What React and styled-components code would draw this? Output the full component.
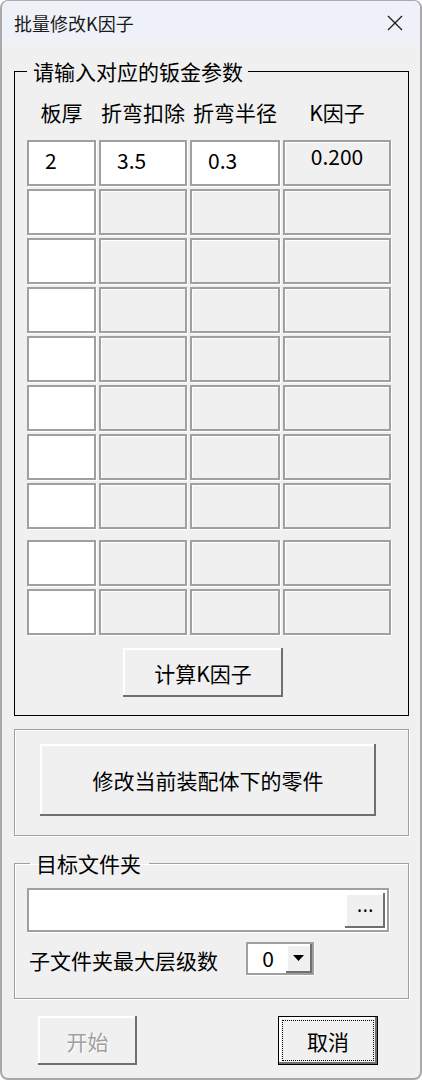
import React from 'react'
import styled, {createGlobalStyle, css} from 'styled-components'

const GlobalStyle = createGlobalStyle`
  html, body {
    margin: 0;
    padding: 0;
    background: #fff;
  }
  body {
    font-family: "Noto Sans CJK SC", "Noto Sans", sans-serif;
    color: #000;
  }
  * {
    box-sizing: border-box;
  }
`

const raised = css`
  background: #f0f0f0;
  border: none;
  box-shadow: inset -2px -2px 0 #707070, inset 2px 2px 0 #fff;
`

const sunken = css`
  border: 2px solid #a0a0a0;
  box-shadow: 1px 1px 0 #fff;
`

const etched = css`
  border: 1px solid #a0a0a0;
  box-shadow: 1px 1px 0 #fff, inset 1px 1px 0 #fff;
`

const Window = styled.div`
  width: 422px;
  height: 1080px;
  display: flex;
  flex-direction: column;
  background: #f0f0f0;
  border: 2px solid #a9a9a9;
  border-top-width: 1px;
  border-radius: 8px;
  overflow: hidden;
`

const TitleBar = styled.div`
  height: 43px;
  flex-shrink: 0;
  display: flex;
  align-items: center;
  justify-content: space-between;
  padding: 0 17px 0 12px;
  background: #eef2f8;
`

const Title = styled.div`
  font-size: 18px;
  line-height: 20px;
  color: #1b1b1b;
`

const Body = styled.div`
  display: flex;
  flex-direction: column;
  padding: 0 11px 0 12px;
`

const Group = styled.fieldset`
  margin: ${p => p.$mt}px 0 0;
  min-width: 0;
  padding: 0 12px ${p => p.$pb}px 12px;
  ${p => (p.$etched ? etched : css`border: 1px solid #000;`)}
`

const Legend = styled.legend`
  margin-left: ${p => p.$ml}px;
  padding: 0 ${p => p.$pr}px 0 6px;
  font-size: 21px;
  line-height: 22px;
`

const Columns = styled.div`
  display: grid;
  grid-template-columns: 69px 88px 90px 108px;
  column-gap: 3px;
  row-gap: 3px;
  margin-top: ${p => p.$mt}px;
`

const HeadLabel = styled.div`
  font-size: 21px;
  line-height: 22px;
  text-align: center;
  white-space: nowrap;
`

const Cell = styled.div`
  height: 46px;
  font-size: 21px;
  line-height: 22px;
  ${sunken}
  background: ${p => (p.$white ? '#fff' : '#f0f0f0')};
  ${p => !p.$white && css`box-shadow: 1px 1px 0 #fff, inset 1px 1px 0 #fff;`}
  ${p =>
    p.$result
      ? css`
          padding-top: 3px;
          text-align: center;
        `
      : css`
          padding: 7px 0 0 16px;
        `}
`

const Button = styled.button`
  ${raised}
  width: ${p => p.$w}px;
  height: ${p => p.$h}px;
  margin: ${p => p.$m || 0};
  padding: 0;
  font-family: inherit;
  font-size: 21px;
  line-height: 22px;
  color: ${p => (p.disabled ? '#a0a0a0' : '#000')};
  ${p => p.disabled && css`text-shadow: 1px 1px 0 #fff;`}
  ${p =>
    p.$default &&
    css`
      border: 1px solid #000;
      padding: 3px;
      display: flex;
    `}
`

const FocusRing = styled.span`
  flex: 1;
  display: flex;
  align-items: center;
  justify-content: center;
  border: 1px dotted #000;
`

const Panel = styled.div`
  ${etched}
  margin-top: 13px;
  padding: 14px 0 19px 25px;
`

const PathField = styled.div`
  ${sunken}
  margin-top: 14px;
  width: 362px;
  height: 44px;
  background: #fff;
  display: flex;
  align-items: center;
  justify-content: flex-end;
  padding-right: 2px;
`

const BrowseButton = styled.button`
  ${raised}
  width: 40px;
  height: 35px;
  padding: 0 0 10px 1px;
  font-family: "Noto Sans", sans-serif;
  font-size: 19px;
  line-height: 16px;
  letter-spacing: 0.5px;
  color: #000;
`

const LevelRow = styled.div`
  margin-top: 10px;
  display: flex;
  align-items: center;
  gap: 28px;
  padding-left: 2px;
`

const Label = styled.span`
  font-size: 21px;
  line-height: 22px;
  padding-top: 3px;
`

const Select = styled.div`
  ${sunken}
  width: 68px;
  height: 33px;
  background: #fff;
  display: flex;
`

const SelectValue = styled.span`
  flex: 1;
  text-align: center;
  font-size: 21px;
  line-height: 29px;
  padding-left: 2px;
`

const SelectArrow = styled.span`
  ${raised}
  width: 26px;
  display: flex;
  align-items: center;
  justify-content: center;
  padding: 0 2px 2px 0;
`

const Footer = styled.div`
  margin-top: 17px;
  display: flex;
  justify-content: space-between;
  padding: 0 31px 0 24px;
`

const heads = ['板厚', '折弯扣除', '折弯半径', 'K因子']

function EmptyRow() {
  return (
    <>
      <Cell $white />
      <Cell />
      <Cell />
      <Cell />
    </>
  )
}

export default function App() {
  return (
    <>
      <GlobalStyle />
      <Window>
        <TitleBar>
          <Title>批量修改K因子</Title>
          <svg width="16" height="16" viewBox="0 0 16 16">
            <path d="M1 1 L15 15 M15 1 L1 15" stroke="#1b1b1b" strokeWidth="1.3" />
          </svg>
        </TitleBar>
        <Body>
          <Group $mt={16} $pb={18}>
            <Legend $ml={0} $pr={5}>请输入对应的钣金参数</Legend>
            <Columns $mt={19}>
              {heads.map(h => (
                <HeadLabel key={h}>{h}</HeadLabel>
              ))}
            </Columns>
            <Columns $mt={17}>
              <Cell $white>2</Cell>
              <Cell $white>3.5</Cell>
              <Cell $white>0.3</Cell>
              <Cell $result>0.200</Cell>
              {[0, 1, 2, 3, 4, 5, 6].map(i => (
                <EmptyRow key={i} />
              ))}
            </Columns>
            <Columns $mt={11}>
              <EmptyRow />
              <EmptyRow />
            </Columns>
            <Button $w={160} $h={49} $m="13px 0 0 96px">计算K因子</Button>
          </Group>

          <Panel>
            <Button $w={336} $h={72}>修改当前装配体下的零件</Button>
          </Panel>

          <Group $etched $mt={16} $pb={23}>
            <Legend $ml={3} $pr={8}>目标文件夹</Legend>
            <PathField>
              <BrowseButton>...</BrowseButton>
            </PathField>
            <LevelRow>
              <Label>子文件夹最大层级数</Label>
              <Select>
                <SelectValue>0</SelectValue>
                <SelectArrow>
                  <svg width="11" height="6" viewBox="0 0 11 6">
                    <path d="M0 0 H11 L5.5 6 Z" fill="#000" />
                  </svg>
                </SelectArrow>
              </Select>
            </LevelRow>
          </Group>

          <Footer>
            <Button $w={99} $h={49} disabled>开始</Button>
            <Button $w={100} $h={49} $default>
              <FocusRing>取消</FocusRing>
            </Button>
          </Footer>
        </Body>
      </Window>
    </>
  )
}
